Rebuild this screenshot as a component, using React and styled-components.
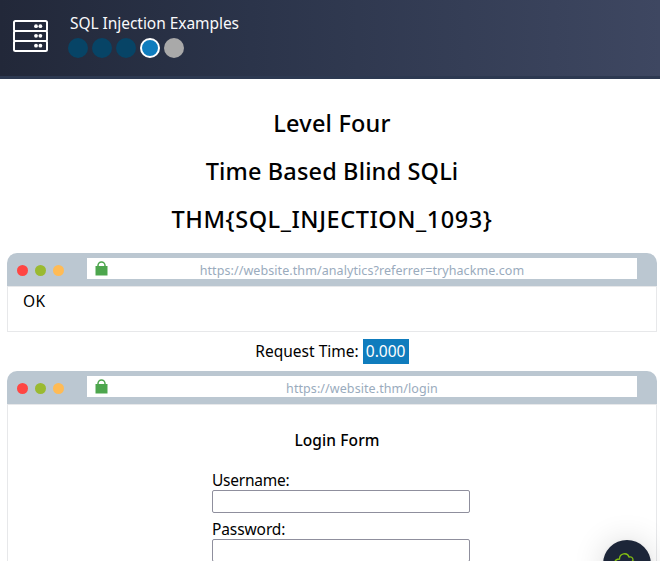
import React from 'react';
import styled, { createGlobalStyle } from 'styled-components';

const GlobalStyle = createGlobalStyle`
  * { box-sizing: border-box; }
  html, body { margin: 0; height: 100%; overflow: hidden; background: #fff; }
  body { font: 16px/24px "Noto Sans", "Open Sans", sans-serif; color: #000; }
`;

const Page = styled.div`
  height: 561px;
  overflow: hidden;
`;

const Header = styled.header`
  display: flex;
  height: 79px;
  padding: 11px 0 0 12px;
  border-bottom: 3px solid #2d3951;
  background: linear-gradient(90deg, #222839 0%, #2b344a 38%, #3e4761 100%);
  color: #f9f9fb;
`;

const ServerIcon = styled.svg`
  width: 37px;
  height: 34px;
  margin-top: 8px;
  fill: none;
  stroke: #fff;
  stroke-width: 2;
`;

const HeaderInfo = styled.div`
  margin-left: 19px;
`;

const Label = styled.span`
  display: inline-block;
  font-size: ${(p) => p.$size || 15.5}px;
  letter-spacing: ${(p) => p.$spacing || 0}px;
  white-space: nowrap;
`;

const HeaderTitle = styled.div`
  height: 24px;
  padding-left: 2px;
`;

const Levels = styled.div`
  display: flex;
  gap: 4px;
  margin-top: 3px;
`;

const levelColors = { done: '#074466', active: '#0f7cbd', locked: '#a9a9a9' };

const Level = styled.span`
  width: 20px;
  height: 20px;
  border-radius: 50%;
  background: ${(p) => levelColors[p.$state]};
  border: ${(p) => (p.$state === 'active' ? '2px solid #fff' : 'none')};
`;

const Main = styled.main`
  padding: 20px 3px 0 7px;
`;

const Heading = styled.h2`
  height: 48px;
  margin: 0;
  line-height: 48px;
  font-weight: 500;
  text-align: center;
`;

const Browser = styled.section`
  width: 650px;
  margin-top: ${(p) => p.$top}px;
`;

const BrowserBar = styled.div`
  display: flex;
  align-items: flex-start;
  height: 33px;
  padding: 5px 20px 0 10px;
  border-radius: 10px 10px 0 0;
  background: #bbc7d1;
`;

const Lights = styled.div`
  display: flex;
  gap: 7px;
  width: 70px;
  padding-top: 7px;
`;

const Light = styled.span`
  width: 11px;
  height: 11px;
  border-radius: 50%;
  background: ${(p) => p.$color};
`;

const Address = styled.div`
  display: flex;
  width: 550px;
  height: 21px;
  padding-left: 8px;
  background: #fff;
  color: #9aabbd;
`;

const LockIcon = styled.svg`
  flex: none;
  width: 13px;
  height: 15px;
  margin-top: 3px;
`;

const Url = styled.div`
  flex: 1;
  padding-right: 21px;
  line-height: 23px;
  text-align: center;
`;

const BrowserBody = styled.div`
  height: ${(p) => p.$height}px;
  padding: 2px 15px;
  border: 1px solid #e7e8ea;
`;

const RequestTime = styled.div`
  display: flex;
  justify-content: center;
  gap: 4px;
  height: 25px;
  margin-top: 7px;
`;

const TimeValue = styled.span`
  width: 46px;
  background: #0f7cbd;
  color: #fff;
  text-align: center;
`;

const Form = styled.form`
  width: 258px;
  margin: 20px 0 0 189px;
`;

const FormTitle = styled.h3`
  height: 24px;
  margin: 0 0 17px;
  padding-right: 8px;
  font-weight: 500;
  text-align: center;
`;

const Field = styled.label`
  display: block;
  height: 49px;
`;

const FieldName = styled.div`
  height: 22px;
`;

const Input = styled.input`
  display: block;
  width: 258px;
  height: 23px;
  padding: 1px 2px;
  border: 1px solid #8f8f9d;
  border-radius: 2px;
  background: #fff;
`;

const ChatButton = styled.button`
  position: fixed;
  left: 603px;
  top: 540px;
  width: 48px;
  height: 48px;
  padding: 0;
  border: 0;
  border-radius: 50%;
  background: #1c2538;
  box-shadow: 0 1px 6px rgba(0, 0, 0, 0.06), 0 2px 32px rgba(0, 0, 0, 0.16);
`;

const CloudIcon = styled.svg`
  display: block;
  width: 48px;
  height: 48px;
  fill: none;
  stroke: #82bd12;
  stroke-width: 1.3;
`;

function BrowserWindow({ url, top, height, children }) {
  return (
    <Browser $top={top}>
      <BrowserBar>
        <Lights>
          <Light $color="#ff4643" />
          <Light $color="#9aba31" />
          <Light $color="#ffbb55" />
        </Lights>
        <Address>
          <LockIcon viewBox="0 0 13 15">
            <path d="M3 6V4.5a3.5 3.5 0 0 1 7 0V6" fill="none" stroke="#4da64d" strokeWidth="1.5" />
            <path d="M.5 5h12v9.5H.5z" fill="#4da64d" />
          </LockIcon>
          <Url><Label $size={12.5} $spacing={0.08}>{url}</Label></Url>
        </Address>
      </BrowserBar>
      <BrowserBody $height={height}>{children}</BrowserBody>
    </Browser>
  );
}

export default function App() {
  return (
    <Page>
      <GlobalStyle />
      <Header>
        <ServerIcon viewBox="0 0 37 34">
          <rect x="2" y="2" width="33" height="10" rx="1.5" />
          <rect x="2" y="12" width="33" height="10" rx="1.5" />
          <rect x="2" y="22" width="33" height="10" rx="1.5" />
          <g fill="#fff" stroke="none">
            <circle cx="24" cy="7.2" r="1.9" /><circle cx="28.4" cy="7.2" r="1.9" />
            <circle cx="24" cy="16.8" r="1.9" /><circle cx="28.4" cy="16.8" r="1.9" />
            <circle cx="24" cy="26.7" r="1.9" /><circle cx="28.4" cy="26.7" r="1.9" />
          </g>
        </ServerIcon>
        <HeaderInfo>
          <HeaderTitle><Label $spacing={-0.05}>SQL Injection Examples</Label></HeaderTitle>
          <Levels>
            <Level $state="done" />
            <Level $state="done" />
            <Level $state="done" />
            <Level $state="active" />
            <Level $state="locked" />
          </Levels>
        </HeaderInfo>
      </Header>
      <Main>
        <Heading><Label $size={23.5} $spacing={0.2}>Level Four</Label></Heading>
        <Heading><Label $size={23.5} $spacing={0.15}>Time Based Blind SQLi</Label></Heading>
        <Heading><Label $size={23.5} $spacing={0.56}>THM&#123;SQL_INJECTION_1093&#125;</Label></Heading>
        <BrowserWindow url="https://website.thm/analytics?referrer=tryhackme.com" top={10} height={46}>
          <Label $spacing={0.3}>OK</Label>
        </BrowserWindow>
        <RequestTime>
          <Label>Request Time:</Label>
          <TimeValue><Label>0.000</Label></TimeValue>
        </RequestTime>
        <BrowserWindow url="https://website.thm/login" top={7} height={180}>
          <Form>
            <FormTitle><Label $spacing={0.1}>Login Form</Label></FormTitle>
            <Field>
              <FieldName><Label $spacing={-0.25}>Username:</Label></FieldName>
              <Input type="text" />
            </Field>
            <Field>
              <FieldName><Label $spacing={-0.1}>Password:</Label></FieldName>
              <Input type="password" />
            </Field>
          </Form>
        </BrowserWindow>
      </Main>
      <ChatButton type="button" aria-label="Open chat">
        <CloudIcon viewBox="0 0 48 48">
          <path d="M16 26c-6-1-5-7 .5-7 0-6 8-7 9.5-2 4-1 4.500 3 3.500 4 4 1 3 5 0 5z" />
        </CloudIcon>
      </ChatButton>
    </Page>
  );
}
